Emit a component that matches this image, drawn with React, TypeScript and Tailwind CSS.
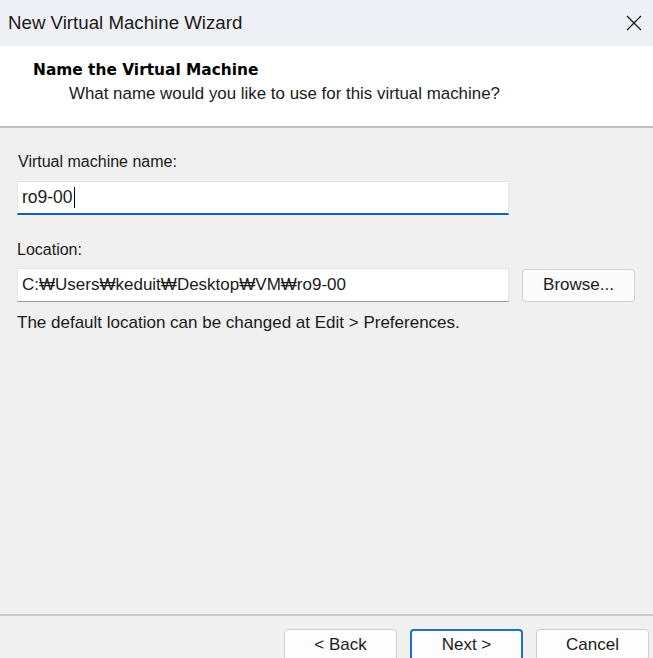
import React from "react";

const ui = { fontFamily: '"Liberation Sans", Arial, sans-serif' };
const heading = { fontFamily: '"DejaVu Sans", Verdana, sans-serif' };

function WinButton({ label, primary }: { label: string; primary?: boolean }) {
  return (
    <button
      className={
        "w-[113px] h-[32px] rounded-[4px] bg-[#fdfdfd] text-[17px] text-[#1b1b1b] flex items-center justify-center " +
        (primary ? "border-2 border-[#1f6fc6]" : "border border-[#cfcfcf]")
      }
      style={ui}
    >
      {label}
    </button>
  );
}

export default function App() {
  return (
    <div className="w-[653px] h-[658px] overflow-hidden flex flex-col bg-[#f0f0f0]" style={ui}>
      {/* window title bar */}
      <div className="h-[46px] shrink-0 bg-[#eff0f6] flex items-center justify-between pl-[8px] pr-[8px]">
        <span className="text-[18.7px] text-[#1a1a1a]">New Virtual Machine Wizard</span>
        <svg width="18" height="18" viewBox="0 0 18 18" className="mr-[2px]">
          <path d="M2 2 L16 16 M16 2 L2 16" stroke="#1a1a1a" strokeWidth="1.3" fill="none" />
        </svg>
      </div>

      {/* page header */}
      <div className="h-[82px] shrink-0 bg-white border-b-2 border-[#c0c0c0] pt-[13px]">
        <div className="pl-[33px] text-[15.4px] font-bold text-black leading-[23px]" style={heading}>
          Name the Virtual Machine
        </div>
        <div className="pl-[69px] text-[16.9px] text-[#1a1a1a] leading-[24px]">
          What name would you like to use for this virtual machine?
        </div>
      </div>

      {/* form */}
      <div className="flex-1 px-[17px] pt-[23px] text-[16px] text-[#1a1a1a]">
        <div className="leading-[22px] pl-[1px]">Virtual machine name:</div>
        <div className="mt-[8px] w-[492px] h-[34px] bg-white border border-[#e4e4e4] border-b-2 border-b-[#0f5fbf] flex items-center pl-[4px] text-[17.5px]">
          <span>ro9-00</span>
          <span className="w-[1px] h-[21px] bg-black ml-[1px]" />
        </div>

        <div className="mt-[24px] leading-[22px]">Location:</div>
        <div className="mt-[7px] flex items-center gap-[13px]">
          <div className="w-[492px] h-[34px] bg-white border border-[#e4e4e4] border-b-[#9a9a9a] flex items-center pl-[4px] text-[17px]">
            C:₩Users₩keduit₩Desktop₩VM₩ro9-00
          </div>
          <button className="w-[113px] h-[33px] rounded-[4px] bg-[#fbfbfb] border border-[#d0d0d0] text-[17px] text-[#1b1b1b]">
            Browse...
          </button>
        </div>

        <div className="mt-[10px] leading-[22px] text-[17px]">The default location can be changed at Edit &gt; Preferences.</div>
      </div>

      {/* footer buttons */}
      <div className="h-[44px] shrink-0 border-t-2 border-[#c8c8c8] flex items-start justify-end gap-[13px] pr-[4px] pt-[13px]">
        <WinButton label="< Back" />
        <WinButton label="Next >" primary />
        <WinButton label="Cancel" />
      </div>
    </div>
  );
}
